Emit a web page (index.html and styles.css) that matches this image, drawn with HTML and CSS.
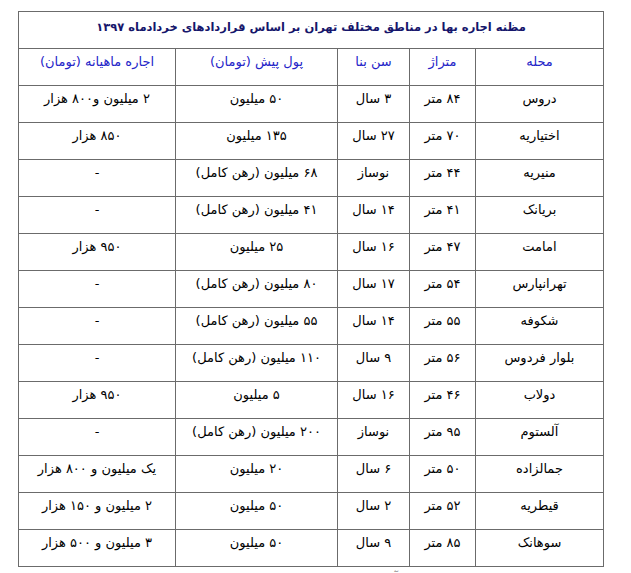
FILE: index.html
```html
<!DOCTYPE html>
<html lang="fa" dir="rtl">
<head>
<meta charset="utf-8">
<title>مظنه اجاره بها</title>
<link rel="stylesheet" href="styles.css">
</head>
<body>
<div class="wrap">
<table class="rent">
<colgroup>
<col class="c-area"><col class="c-size"><col class="c-age"><col class="c-dep"><col class="c-rent">
</colgroup>
<thead>
<tr class="title-row"><th colspan="5">مظنه اجاره بها در مناطق مختلف تهران بر اساس قراردادهای خردادماه ۱۳۹۷</th></tr>
<tr class="head-row"><th>محله</th><th>متراژ</th><th>سن بنا</th><th>پول پیش (تومان)</th><th>اجاره ماهیانه (تومان)</th></tr>
</thead>
<tbody>
<tr><td>دروس</td><td>۸۴ متر</td><td>۳ سال</td><td>۵۰ میلیون</td><td>۲ میلیون و۸۰۰ هزار</td></tr>
<tr><td>اختیاریه</td><td>۷۰ متر</td><td>۲۷ سال</td><td>۱۳۵ میلیون</td><td>۸۵۰ هزار</td></tr>
<tr><td>منیریه</td><td>۴۴ متر</td><td>نوساز</td><td>۶۸ میلیون (رهن کامل)</td><td>-</td></tr>
<tr><td>بریانک</td><td>۴۱ متر</td><td>۱۴ سال</td><td>۴۱ میلیون (رهن کامل)</td><td>-</td></tr>
<tr><td>امامت</td><td>۴۷ متر</td><td>۱۶ سال</td><td>۲۵ میلیون</td><td>۹۵۰ هزار</td></tr>
<tr><td>تهرانپارس</td><td>۵۴ متر</td><td>۱۷ سال</td><td>۸۰ میلیون (رهن کامل)</td><td>-</td></tr>
<tr><td>شکوفه</td><td>۵۵ متر</td><td>۱۴ سال</td><td>۵۵ میلیون (رهن کامل)</td><td>-</td></tr>
<tr><td>بلوار فردوس</td><td>۵۶ متر</td><td>۹ سال</td><td>۱۱۰ میلیون (رهن کامل)</td><td>-</td></tr>
<tr><td>دولاب</td><td>۴۶ متر</td><td>۱۶ سال</td><td>۵ میلیون</td><td>۹۵۰ هزار</td></tr>
<tr><td>آلستوم</td><td>۹۵ متر</td><td>نوساز</td><td>۲۰۰ میلیون (رهن کامل)</td><td>-</td></tr>
<tr><td>جمالزاده</td><td>۵۰ متر</td><td>۶ سال</td><td>۲۰ میلیون</td><td>یک میلیون و ۸۰۰ هزار</td></tr>
<tr><td>قیطریه</td><td>۵۲ متر</td><td>۲ سال</td><td>۵۰ میلیون</td><td>۲ میلیون و ۱۵۰ هزار</td></tr>
<tr><td>سوهانک</td><td>۸۵ متر</td><td>۹ سال</td><td>۵۰ میلیون</td><td>۳ میلیون و ۵۰۰ هزار</td></tr>
</tbody>
</table>
<p class="caption">منبع: بررسی قراردادهای اجاره ثبت شده در آژانس‌های املاک مناطق مختلف تهران در خردادماه</p>
</div>
</body>
</html>
```

FILE: styles.css
```css
html, body {
  margin: 0;
  padding: 0;
  background: #ffffff;
}

.wrap {
  padding: 11px 27px 0 19px;
}

.rent {
  width: 585px;
  table-layout: fixed;
  border-collapse: collapse;
  font-family: "DejaVu Sans", "Noto Sans", sans-serif;
  font-size: 13px;
  color: #000;
}

.c-area { width: 128px; }
.c-size { width: 66px; }
.c-age { width: 72px; }
.c-dep { width: 162px; }
.c-rent { width: 157px; }

.rent th,
.rent td {
  border: 1px solid #6b6b6b;
  height: 37px;
  padding: 3px 2px 0;
  box-sizing: border-box;
  vertical-align: top;
  text-align: center;
  line-height: 20px;
  white-space: nowrap;
}

.title-row th {
  font-weight: bold;
  color: #16166b;
  font-size: 11.5px;
  padding-top: 5px;
}

.head-row th {
  font-weight: normal;
  color: #2424c8;
}

.caption {
  margin: 4px 0 0;
  font-family: "DejaVu Sans", sans-serif;
  font-size: 11px;
  color: #666;
  text-align: right;
  padding-right: 4px;
}
```
